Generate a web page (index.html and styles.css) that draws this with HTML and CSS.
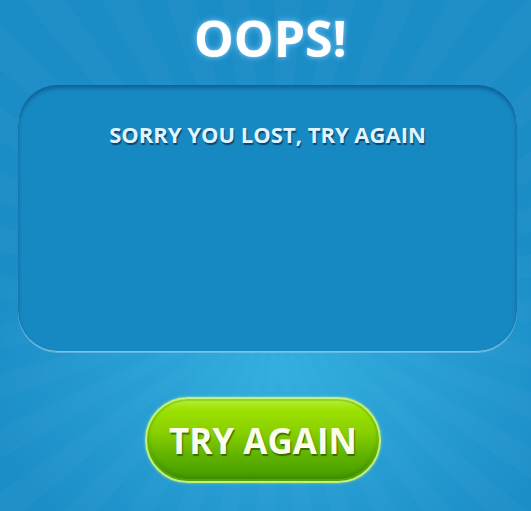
FILE: index.html
```html
<!DOCTYPE html>
<html>
<head>
<meta charset="utf-8">
<link rel="stylesheet" href="styles.css">
</head>
<body>
<div class="screen">
  <h1 class="title">OOPS!</h1>
  <div class="panel">
    <p class="message">SORRY YOU LOST, TRY AGAIN</p>
  </div>
  <div class="actions">
    <button class="btn">TRY AGAIN</button>
  </div>
</div>
</body>
</html>
```
FILE: styles.css
```css
html, body {
  margin: 0;
  padding: 0;
}
body {
  width: 531px;
  height: 511px;
  overflow: hidden;
  font-family: "Open Sans", "Liberation Sans", sans-serif;
}
.screen {
  width: 531px;
  height: 511px;
  box-sizing: border-box;
  padding-left: 4px;
  display: flex;
  flex-direction: column;
  align-items: center;
  background:
    radial-gradient(ellipse 300px 220px at 280px 370px, rgba(60, 185, 232, 0.75), rgba(60, 185, 232, 0) 100%),
    repeating-conic-gradient(from 0deg at 275px 300px, rgba(255,255,255,0.025) 0deg 5deg, rgba(255,255,255,0) 5deg 10deg),
    linear-gradient(to bottom, #1a8cc6 0%, #1b8ec7 100%);
}
.title {
  margin: 8px 0 0 6px;
  height: 60px;
  font-size: 50px;
  line-height: 60px;
  font-weight: 700;
  color: #ffffff;
  text-shadow:
    0 0 2px rgba(110, 190, 235, 0.9),
    0 0 5px rgba(110, 190, 235, 0.85),
    0 0 8px rgba(110, 190, 235, 0.6);
}
.panel {
  margin-top: 17px;
  width: 499px;
  height: 267px;
  box-sizing: border-box;
  border-radius: 40px;
  background: #1789c2;
  box-shadow:
    inset 0 3px 4px rgba(10, 60, 110, 0.55),
    inset 0 -1px 0 rgba(170, 220, 245, 0.75),
    0 1px 0 rgba(150, 210, 240, 0.5);
  display: flex;
  justify-content: center;
}
.message {
  margin: 35px 0 0 0;
  font-size: 22px;
  line-height: 28px;
  font-weight: 700;
  color: #dff4ff;
  text-shadow: 1px 2px 1px rgba(5, 50, 90, 0.75);
}
.actions {
  margin-top: 45px;
  margin-right: 9px;
}
.btn {
  width: 236px;
  height: 86px;
  box-sizing: border-box;
  border-radius: 43px;
  border: 2px solid #c2f07c;
  background: linear-gradient(to bottom, #b8f03a 0%, #9ce000 14%, #8ad000 40%, #62b300 68%, #449a00 100%);
  box-shadow:
    0 0 3px rgba(190, 240, 130, 0.7),
    inset 0 0 0 2px rgba(110, 190, 20, 0.5),
    inset 0 -4px 5px rgba(40, 110, 0, 0.45);
  font-family: "Open Sans", "Liberation Sans", sans-serif;
  font-size: 35px;
  font-weight: 700;
  color: #fbfde9;
  text-shadow: 1px 2px 1px rgba(30, 80, 0, 0.7);
  padding: 0;
  cursor: pointer;
}
```
